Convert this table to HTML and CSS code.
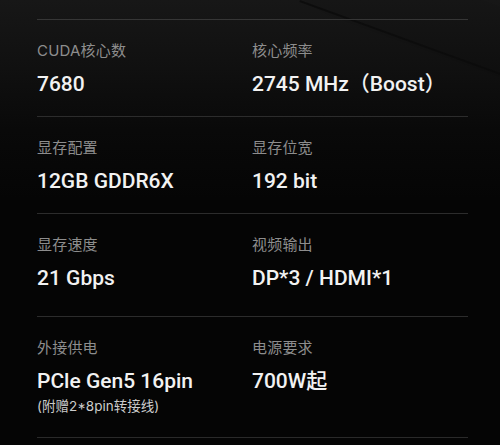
FILE: index.html
```html
<!DOCTYPE html>
<html lang="zh-CN">
<head>
<meta charset="utf-8">
<title>规格参数</title>
<link rel="stylesheet" href="styles.css">
</head>
<body>
<div class="page">
  <div class="streak"></div>
  <div class="specs">
    <div class="row">
      <div class="cell">
        <div class="label">CUDA核心数</div>
        <div class="value">7680</div>
      </div>
      <div class="cell">
        <div class="label">核心频率</div>
        <div class="value">2745 MHz（Boost）</div>
      </div>
    </div>
    <div class="row">
      <div class="cell">
        <div class="label">显存配置</div>
        <div class="value">12GB GDDR6X</div>
      </div>
      <div class="cell">
        <div class="label">显存位宽</div>
        <div class="value">192 bit</div>
      </div>
    </div>
    <div class="row row-tall">
      <div class="cell">
        <div class="label">显存速度</div>
        <div class="value">21 Gbps</div>
      </div>
      <div class="cell">
        <div class="label">视频输出</div>
        <div class="value">DP*3 / HDMI*1</div>
      </div>
    </div>
    <div class="row">
      <div class="cell">
        <div class="label">外接供电</div>
        <div class="value">PCle Gen5 16pin</div>
        <div class="note">(附赠2*8pin转接线)</div>
      </div>
      <div class="cell">
        <div class="label">电源要求</div>
        <div class="value">700W起</div>
      </div>
    </div>
  </div>
</div>
</body>
</html>
```

FILE: styles.css
```css
html, body {
  margin: 0;
  padding: 0;
  background: #050505;
}
body {
  font-family: Inter, "Noto Sans CJK SC", sans-serif;
  width: 500px;
  height: 445px;
  overflow: hidden;
}
.page {
  position: relative;
  width: 500px;
  height: 445px;
  background: linear-gradient(to bottom, #171717 0px, #111111 60px, #090909 130px, #050505 200px);
  overflow: hidden;
  padding-top: 19px;
  box-sizing: border-box;
}
.streak {
  position: absolute;
  left: 300px;
  top: 0;
  width: 260px;
  height: 2px;
  background: linear-gradient(to right, rgba(0,0,0,0.45), rgba(0,0,0,0.25));
  transform-origin: 0 0;
  transform: rotate(20deg);
  box-shadow: 0 -30px 40px rgba(40,40,40,0.3);
}
.specs {
  position: relative;
  margin-left: 37px;
  width: 431px;
}
.row {
  display: grid;
  grid-template-columns: 215px 216px;
  border-top: 1px solid #2c2c2c;
  padding: 21px 0 18px;
}
.row:last-child {
  border-bottom: 1px solid #2a2a2a;
  padding-bottom: 22px;
}
.row:first-child {
  border-top-color: #363636;
}
.row-tall {
  padding-bottom: 24px;
}
.label {
  font-size: 15px;
  line-height: 20px;
  color: #8d8d8d;
  margin-bottom: 9px;
  letter-spacing: 0.2px;
}
.value {
  font-family: Roboto, "Noto Sans CJK SC", sans-serif;
  font-size: 21px;
  line-height: 28px;
  font-weight: 500;
  color: #f2f2f2;
  white-space: nowrap;
}
.note {
  font-size: 13.5px;
  line-height: 18px;
  color: #cccccc;
  margin-top: 2px;
}
```
